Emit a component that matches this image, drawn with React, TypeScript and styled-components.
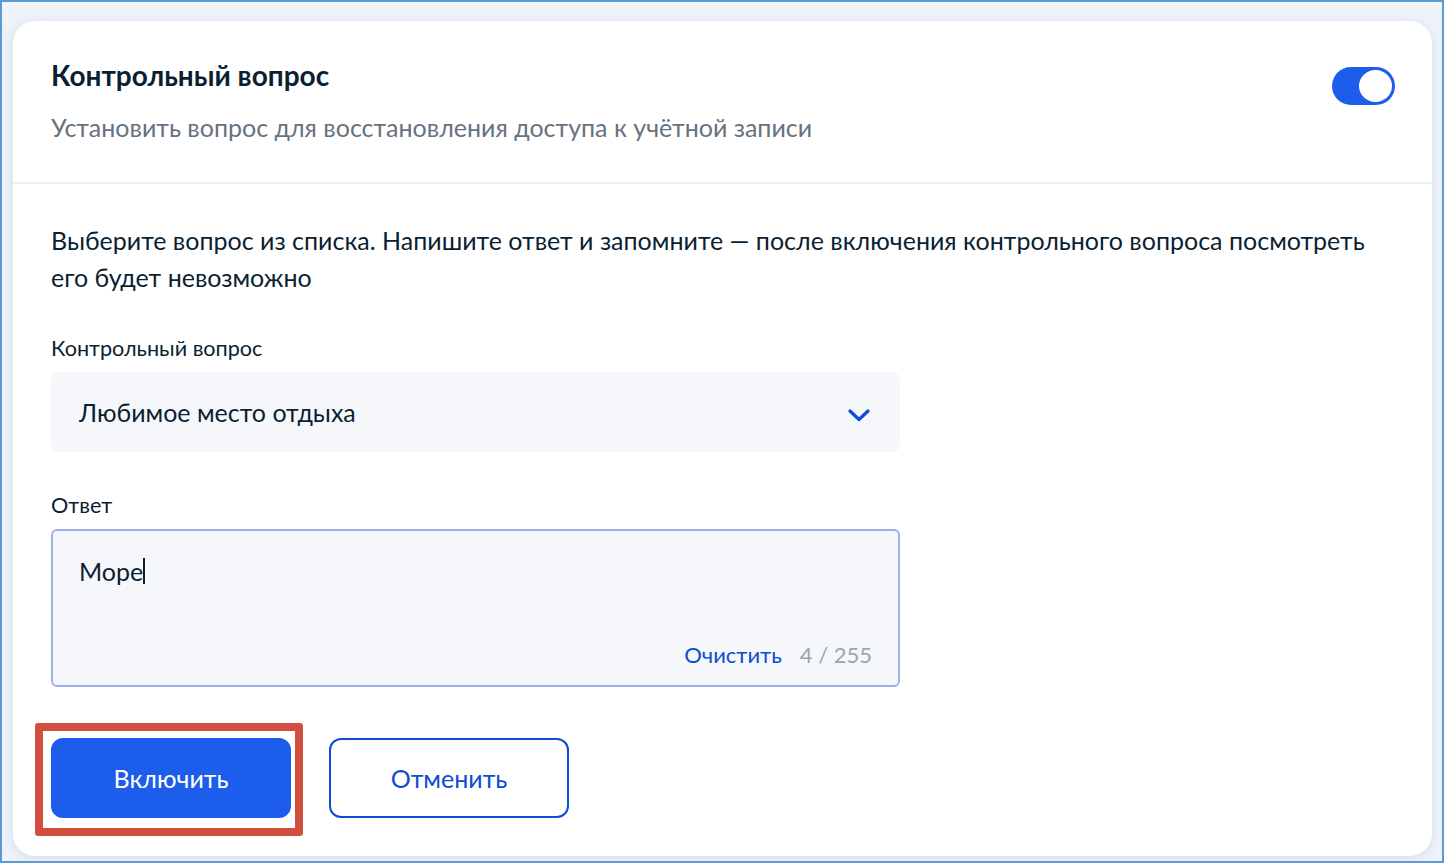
import React from "react";
import styled, { createGlobalStyle } from "styled-components";

const GlobalStyle = createGlobalStyle`
  html, body { margin: 0; padding: 0; }
  body {
    font-family: Lato, "Noto Sans", "Liberation Sans", sans-serif;
    color: #0b1f33;
    -webkit-font-smoothing: antialiased;
  }
  * { box-sizing: border-box; }
`;

const Frame = styled.div`
  width: 1444px;
  height: 863px;
  border: 2px solid #5b9bd5;
  background: #eef2f9;
  padding: 19px 10px 5px 11px;
  display: flex;
`;

const Card = styled.section`
  flex: 1;
  background: #ffffff;
  border-radius: 22px;
  box-shadow: 0 2px 10px rgba(160, 180, 215, 0.35);
  display: flex;
  flex-direction: column;
`;

const Header = styled.header`
  display: flex;
  justify-content: space-between;
  align-items: flex-start;
  padding: 36px 37px 0 38px;
  height: 163px;
  border-bottom: 2px solid #e6edf8;
`;

const HeaderText = styled.div`
  display: flex;
  flex-direction: column;
  gap: 18px;
`;

const Title = styled.h2`
  margin: 0;
  font-size: 28px;
  line-height: 36px;
  font-weight: 700;
  color: #0b1f33;
`;

const Subtitle = styled.p`
  margin: 0;
  font-size: 25px;
  line-height: 32px;
  color: #66727f;
`;

const Toggle = styled.div<{ $on: boolean }>`
  position: relative;
  width: 63px;
  height: 38px;
  margin-top: 10px;
  border-radius: 19px;
  background: ${(p) => (p.$on ? "#1d5deb" : "#c6d1de")};
`;

const Knob = styled.span<{ $on: boolean }>`
  position: absolute;
  top: 3px;
  left: ${(p) => (p.$on ? "27px" : "3px")};
  width: 33px;
  height: 32px;
  border-radius: 50%;
  background: #ffffff;
`;

const Body = styled.div`
  display: flex;
  flex-direction: column;
  padding: 38px 38px 38px 38px;
`;

const Hint = styled.p`
  margin: 0;
  font-size: 25px;
  line-height: 37px;
  color: #0b1f33;
  max-width: 1340px;
`;

const Field = styled.div<{ $top: number }>`
  display: flex;
  flex-direction: column;
  margin-top: ${(p) => p.$top}px;
  width: 849px;
`;

const Label = styled.label`
  font-size: 21.6px;
  line-height: 28px;
  color: #0b1f33;
  margin-bottom: 10px;
`;

const Select = styled.div`
  height: 80px;
  background: #f5f7fa;
  border-radius: 8px;
  display: flex;
  align-items: center;
  justify-content: space-between;
  padding: 0 30px 0 28px;
  font-size: 25px;
  color: #0b1f33;
`;

const ChevronBox = styled.span`
  display: flex;
  margin-top: 7px;
`;

const TextArea = styled.div`
  height: 158px;
  background: #f5f7fa;
  border: 2px solid #9bb3ea;
  border-radius: 6px;
  display: flex;
  flex-direction: column;
  justify-content: space-between;
  padding: 26px 26px 16px 26px;
`;

const Value = styled.div`
  font-size: 25px;
  line-height: 28px;
  color: #0b1f33;
  display: flex;
  align-items: center;
`;

const Caret = styled.span`
  display: inline-block;
  width: 2px;
  height: 26px;
  background: #0b1f33;
`;

const AreaFooter = styled.div`
  display: flex;
  justify-content: flex-end;
  align-items: center;
  gap: 18px;
  font-size: 22px;
  line-height: 28px;
`;

const ClearLink = styled.span`
  color: #0d4cd3;
`;

const Counter = styled.span`
  color: #9aa5b3;
`;

const Actions = styled.div`
  display: flex;
  gap: 38px;
  margin-top: 51px;
`;

const Highlight = styled.div`
  position: relative;
  display: flex;
`;

const Marker = styled.span`
  position: absolute;
  left: -16px;
  top: -15px;
  right: -12px;
  bottom: -18px;
  border: 8px solid #d24f40;
  border-radius: 3px;
  pointer-events: none;
`;

const Button = styled.button<{ $primary?: boolean }>`
  width: 240px;
  height: 80px;
  border-radius: 12px;
  font-family: inherit;
  font-size: 25px;
  cursor: pointer;
  border: 2px solid ${(p) => (p.$primary ? "#1d5deb" : "#0d4cd3")};
  background: ${(p) => (p.$primary ? "#1d5deb" : "#ffffff")};
  color: ${(p) => (p.$primary ? "#ffffff" : "#0d4cd3")};
`;

const Chevron = () => (
  <svg width="22" height="13" viewBox="0 0 22 13" fill="none">
    <path
      d="M2 2 L11 10.5 L20 2"
      stroke="#0d4cd3"
      strokeWidth="3.2"
      strokeLinecap="round"
      strokeLinejoin="round"
    />
  </svg>
);

export default function App() {
  return (
    <>
      <GlobalStyle />
      <Frame>
        <Card>
          <Header>
            <HeaderText>
              <Title>Контрольный вопрос</Title>
              <Subtitle>Установить вопрос для восстановления доступа к учётной записи</Subtitle>
            </HeaderText>
            <Toggle $on>
              <Knob $on />
            </Toggle>
          </Header>
          <Body>
            <Hint>
              Выберите вопрос из списка. Напишите ответ и запомните — после включения контрольного вопроса посмотреть
              его будет невозможно
            </Hint>
            <Field $top={38}>
              <Label>Контрольный вопрос</Label>
              <Select>
                <span>Любимое место отдыха</span>
                <ChevronBox>
                  <Chevron />
                </ChevronBox>
              </Select>
            </Field>
            <Field $top={39}>
              <Label>Ответ</Label>
              <TextArea>
                <Value>
                  Море
                  <Caret />
                </Value>
                <AreaFooter>
                  <ClearLink>Очистить</ClearLink>
                  <Counter>4 / 255</Counter>
                </AreaFooter>
              </TextArea>
            </Field>
            <Actions>
              <Highlight>
                <Button $primary>Включить</Button>
                <Marker />
              </Highlight>
              <Button>Отменить</Button>
            </Actions>
          </Body>
        </Card>
      </Frame>
    </>
  );
}
